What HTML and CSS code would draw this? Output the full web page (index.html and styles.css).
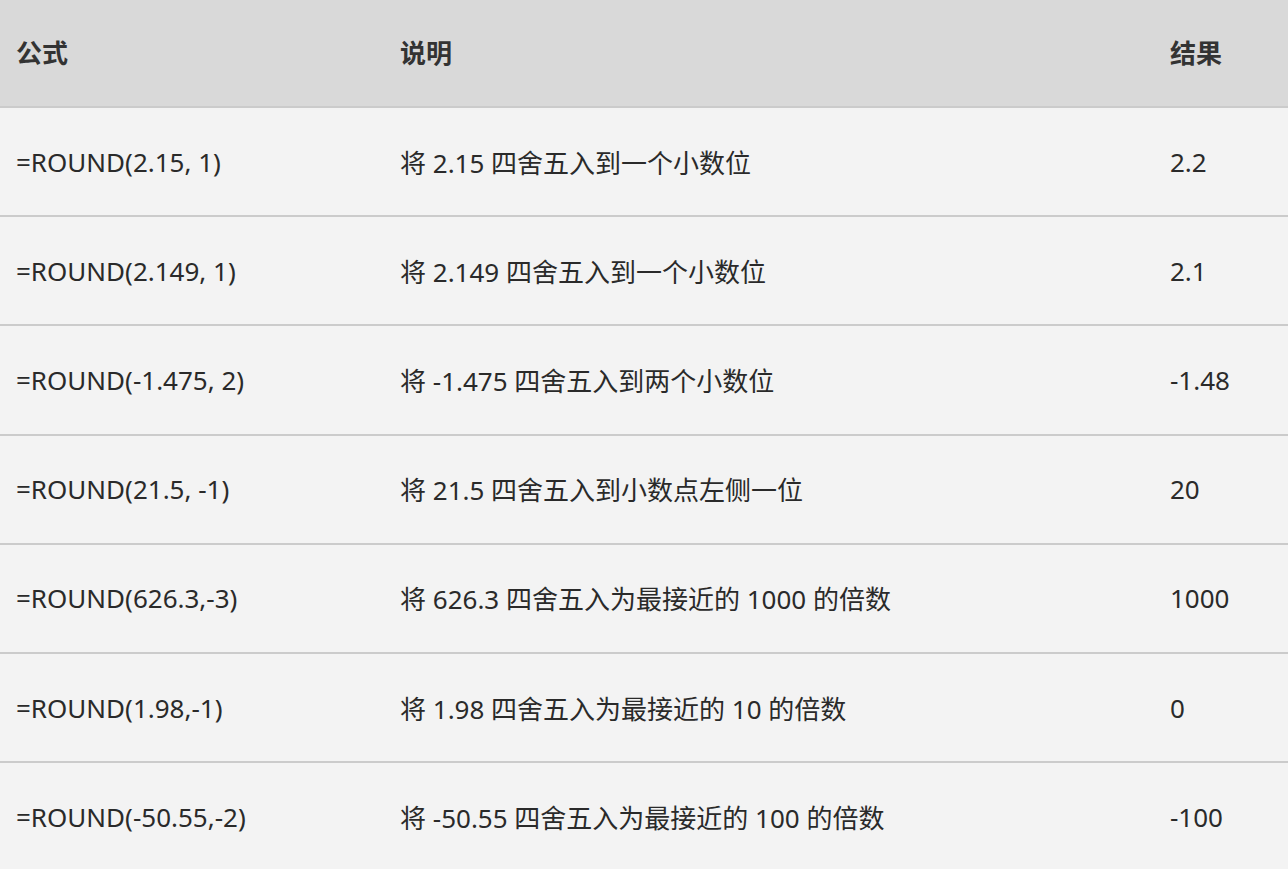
FILE: index.html
```html
<!DOCTYPE html>
<html lang="zh-CN">
<head>
<meta charset="utf-8">
<title>ROUND</title>
<link rel="stylesheet" href="styles.css">
</head>
<body>
<table class="tbl">
  <colgroup>
    <col class="c1"><col class="c2"><col class="c3">
  </colgroup>
  <thead>
    <tr><th>公式</th><th>说明</th><th>结果</th></tr>
  </thead>
  <tbody>
    <tr><td>=ROUND(2.15, 1)</td><td>将 2.15 四舍五入到一个小数位</td><td>2.2</td></tr>
    <tr><td>=ROUND(2.149, 1)</td><td>将 2.149 四舍五入到一个小数位</td><td>2.1</td></tr>
    <tr><td>=ROUND(-1.475, 2)</td><td>将 -1.475 四舍五入到两个小数位</td><td>-1.48</td></tr>
    <tr><td>=ROUND(21.5, -1)</td><td>将 21.5 四舍五入到小数点左侧一位</td><td>20</td></tr>
    <tr><td>=ROUND(626.3,-3)</td><td>将 626.3 四舍五入为最接近的 1000 的倍数</td><td>1000</td></tr>
    <tr><td>=ROUND(1.98,-1)</td><td>将 1.98 四舍五入为最接近的 10 的倍数</td><td>0</td></tr>
    <tr><td>=ROUND(-50.55,-2)</td><td>将 -50.55 四舍五入为最接近的 100 的倍数</td><td>-100</td></tr>
  </tbody>
</table>
</body>
</html>
```
FILE: styles.css
```css
html, body {
  margin: 0;
  padding: 0;
  background: #f3f3f3;
}
.tbl {
  width: 1288px;
  border-collapse: collapse;
  table-layout: fixed;
  font-family: "Noto Sans", "Noto Sans CJK SC", sans-serif;
  font-size: 26px;
  color: #2a2a2a;
}
.c1 { width: 384px; }
.c2 { width: 770px; }
.c3 { width: 134px; }
.tbl th {
  background: #d9d9d9;
  height: 107px;
  padding: 0 0 2px 16px;
  text-align: left;
  font-weight: 700;
  color: #333;
  border-bottom: 2px solid #cbcbcb;
}
.tbl td {
  background: #f3f3f3;
  height: 109.2px;
  padding: 0 0 0 16px;
  vertical-align: middle;
  border-bottom: 2px solid #cbcbcb;
}
.tbl tbody tr:last-child td {
  border-bottom: none;
}
.tbl th, .tbl td {
  box-sizing: border-box;
  white-space: nowrap;
}
```
